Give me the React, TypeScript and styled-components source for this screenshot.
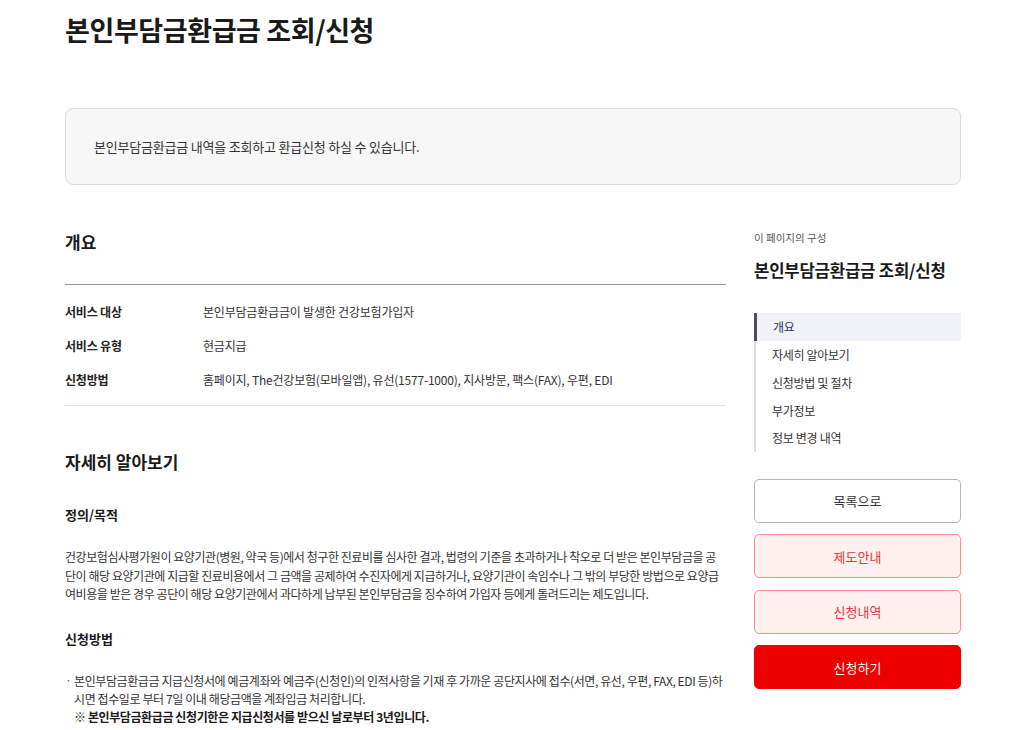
import React from "react";
import styled, { createGlobalStyle } from "styled-components";

const Global = createGlobalStyle`
  html, body { margin: 0; padding: 0; background: #fff; }
  body {
    font-family: "Noto Sans CJK KR", "Noto Sans", sans-serif;
    color: #222;
    letter-spacing: 0;
  }
  * { box-sizing: border-box; }
`;

const Page = styled.div`
  width: 1024px;
  padding: 0 63px 0 65px;
`;

const Title = styled.h1`
  margin: 0;
  padding-top: 11px;
  height: 108px;
  font-size: 27px;
  line-height: 38px;
  font-weight: 700;
  letter-spacing: -0.4px;
  color: #1a1a1a;
`;

const InfoBox = styled.div`
  height: 77px;
  background: #f7f7f7;
  border: 1px solid #dcdcdc;
  border-radius: 8px;
  padding: 0 28px;
  display: flex;
  align-items: center;
  font-size: 13px;
  letter-spacing: -0.2px;
  color: #333;
`;

const Columns = styled.div`
  display: grid;
  grid-template-columns: 661px 207px;
  column-gap: 28px;
  margin-top: 44px;
`;

const Main = styled.div``;

const SectionTitle = styled.h2<{ $top: number }>`
  margin: 0;
  margin-top: ${(p) => p.$top}px;
  font-size: 17px;
  line-height: 26px;
  font-weight: 700;
  color: #1a1a1a;
`;

const Table = styled.div`
  margin-top: 29px;
  border-top: 1px solid #999;
  border-bottom: 1px solid #e5e5e5;
  padding: 9px 0;
`;

const Row = styled.div`
  display: grid;
  grid-template-columns: 138px 1fr;
  height: 34px;
  align-items: center;
  font-size: 12px;
  letter-spacing: -0.2px;
`;

const RowLabel = styled.div`
  font-weight: 700;
  color: #222;
`;

const RowValue = styled.div`
  color: #333;
`;

const SubTitle = styled.h3<{ $top: number }>`
  margin: 0;
  margin-top: ${(p) => p.$top}px;
  font-size: 13px;
  line-height: 20px;
  font-weight: 700;
  color: #1a1a1a;
`;

const Paragraph = styled.p`
  margin: 23px 0 0;
  font-size: 12px;
  line-height: 18.5px;
  letter-spacing: -0.44px;
  color: #333;
`;

const BulletList = styled.ul`
  list-style: none;
  margin: 23px 0 0;
  padding: 0;
`;

const BulletItem = styled.li`
  position: relative;
  padding-left: 9px;
  font-size: 12px;
  line-height: 18px;
  letter-spacing: -0.4px;
  color: #333;
  &::before {
    content: "·";
    position: absolute;
    left: 0;
    top: -1px;
    color: #666;
  }
`;

const Notice = styled.strong`
  display: block;
  font-weight: 700;
  color: #1a1a1a;
`;

const Side = styled.aside``;

const SideCaption = styled.div`
  font-size: 10.5px;
  line-height: 16px;
  color: #555;
  margin-top: 1px;
`;

const SideTitle = styled.div`
  margin-top: 12px;
  font-size: 16.7px;
  line-height: 24px;
  font-weight: 700;
  letter-spacing: -0.2px;
  color: #1a1a1a;
`;

const Nav = styled.nav`
  margin-top: 31px;
  border-left: 2px solid #dddde3;
  display: flex;
  flex-direction: column;
`;

const NavItem = styled.a<{ $active?: boolean }>`
  display: flex;
  align-items: center;
  height: 27.75px;
  padding-left: 16px;
  margin-left: ${(p) => (p.$active ? "-2px" : "0")};
  border-left: ${(p) => (p.$active ? "3px solid #4b4b68" : "none")};
  background: ${(p) => (p.$active ? "#f1f1f8" : "transparent")};
  font-size: 12px;
  letter-spacing: -0.3px;
  color: ${(p) => (p.$active ? "#333355" : "#333")};
  text-decoration: none;
`;

const Buttons = styled.div`
  margin-top: 27px;
  display: flex;
  flex-direction: column;
  gap: 11.5px;
`;

const Button = styled.button<{ $variant: "outline" | "soft" | "solid" }>`
  height: 44px;
  border-radius: 5px;
  font-family: inherit;
  font-size: 13px;
  cursor: pointer;
  border: 1px solid
    ${(p) =>
      p.$variant === "outline" ? "#b5b5b5" : p.$variant === "soft" ? "#ff8f8f" : "#ee0000"};
  background: ${(p) =>
    p.$variant === "outline" ? "#fff" : p.$variant === "soft" ? "#fff0f0" : "#ee0000"};
  color: ${(p) =>
    p.$variant === "outline" ? "#333" : p.$variant === "soft" ? "#ee3333" : "#fff"};
`;

export default function App() {
  return (
    <>
      <Global />
      <Page>
        <Title>본인부담금환급금 조회/신청</Title>
        <InfoBox>본인부담금환급금 내역을 조회하고 환급신청 하실 수 있습니다.</InfoBox>
        <Columns>
          <Main>
            <SectionTitle $top={0}>개요</SectionTitle>
            <Table>
              <Row>
                <RowLabel>서비스 대상</RowLabel>
                <RowValue>본인부담금환급금이 발생한 건강보험가입자</RowValue>
              </Row>
              <Row>
                <RowLabel>서비스 유형</RowLabel>
                <RowValue>현금지급</RowValue>
              </Row>
              <Row>
                <RowLabel>신청방법</RowLabel>
                <RowValue>
                  홈페이지, The건강보험(모바일앱), 유선(1577-1000), 지사방문, 팩스(FAX), 우편, EDI
                </RowValue>
              </Row>
            </Table>
            <SectionTitle $top={43}>자세히 알아보기</SectionTitle>
            <SubTitle $top={30}>정의/목적</SubTitle>
            <Paragraph>
              건강보험심사평가원이 요양기관(병원, 약국 등)에서 청구한 진료비를 심사한 결과, 법령의 기준을
              초과하거나 착오로 더 받은 본인부담금을 공단이 해당 요양기관에 지급할 진료비용에서 그 금액을
              공제하여 수진자에게 지급하거나, 요양기관이 속임수나 그 밖의 부당한 방법으로 요양급여비용을
              받은 경우 공단이 해당 요양기관에서 과다하게 납부된 본인부담금을 징수하여 가입자 등에게
              돌려드리는 제도입니다.
            </Paragraph>
            <SubTitle $top={25}>신청방법</SubTitle>
            <BulletList>
              <BulletItem>
                본인부담금환급금 지급신청서에 예금계좌와 예금주(신청인)의 인적사항을 기재 후 가까운
                공단지사에 접수(서면, 유선, 우편, FAX, EDI 등)하시면 접수일로 부터 7일 이내 해당금액을
                계좌입금 처리합니다.
                <Notice>※ 본인부담금환급금 신청기한은 지급신청서를 받으신 날로부터 3년입니다.</Notice>
              </BulletItem>
            </BulletList>
          </Main>
          <Side>
            <SideCaption>이 페이지의 구성</SideCaption>
            <SideTitle>본인부담금환급금 조회/신청</SideTitle>
            <Nav>
              <NavItem $active>개요</NavItem>
              <NavItem>자세히 알아보기</NavItem>
              <NavItem>신청방법 및 절차</NavItem>
              <NavItem>부가정보</NavItem>
              <NavItem>정보 변경 내역</NavItem>
            </Nav>
            <Buttons>
              <Button $variant="outline">목록으로</Button>
              <Button $variant="soft">제도안내</Button>
              <Button $variant="soft">신청내역</Button>
              <Button $variant="solid">신청하기</Button>
            </Buttons>
          </Side>
        </Columns>
      </Page>
    </>
  );
}
